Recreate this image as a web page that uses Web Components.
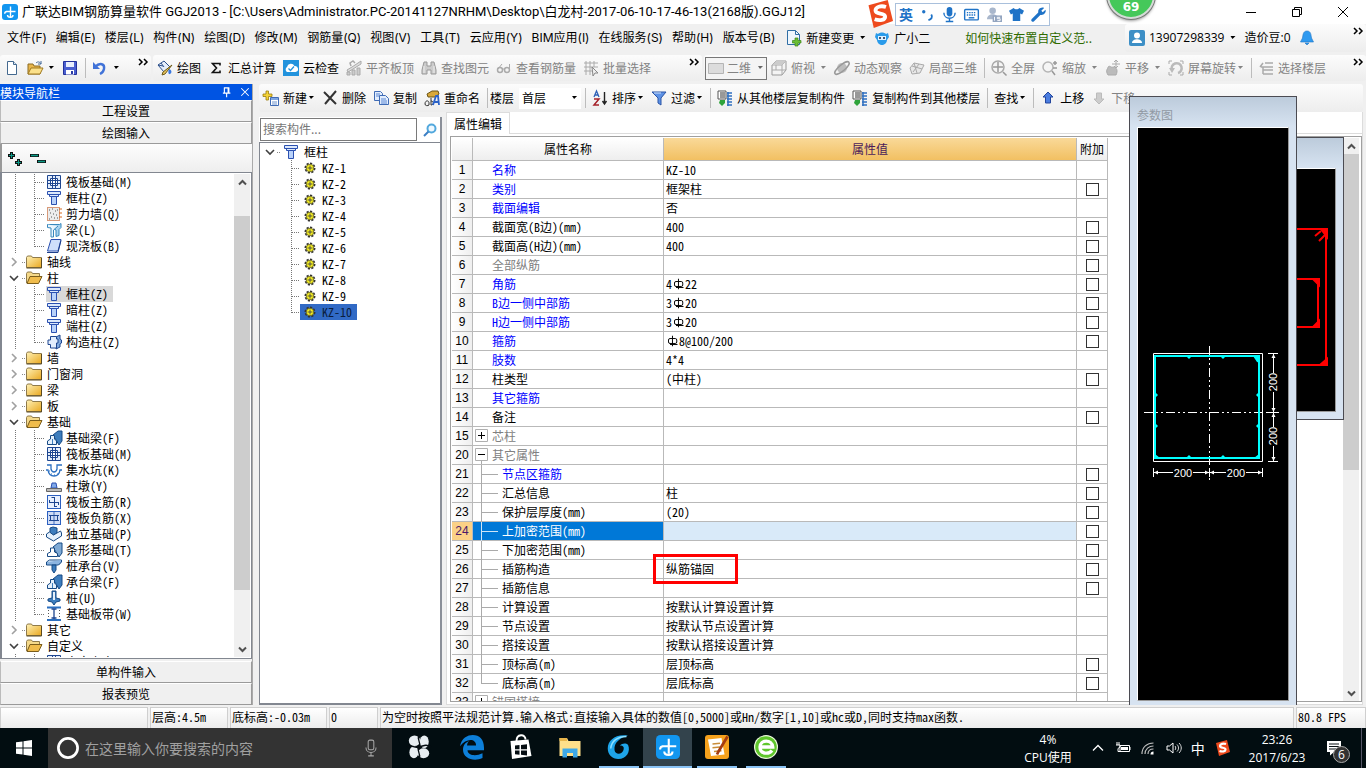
<!DOCTYPE html>
<html lang="zh-CN">
<head>
<meta charset="utf-8">
<title>广联达BIM钢筋算量软件 GGJ2013</title>
<style>
html,body{margin:0;height:100%}
body{font:12px/16px "Open Sans","Noto Sans CJK SC",sans-serif;color:#000;background:#f0f0f0;overflow:hidden}
bim-app{height:100%}
</style>
</head>
<body>
<bim-app></bim-app>
<script>
const ICONS={
logo:'<rect width="16" height="16" rx="3" fill="#1296f0"/><path d="M8.500 2.500v10M5.500 11q0 2.300 3 2.300 2.500 0 2.500-2.300M13.500 7.500H5q-2.300 0-2.300 2.200M4 7.500h3" fill="none" stroke="#fff" stroke-width="1.400"/>',
doc:'<path d="M3.500 1.500h6l3 3v10h-9z" fill="#fff" stroke="#44698f"/><path d="M9.500 1.500v3h3" fill="#dbe8f5" stroke="#44698f"/>',
open:'<path d="M1 4h5l1 2h6v8H1z" fill="#e8b64c" stroke="#8b6a20"/><path d="M1 14l3-6h12l-3 6z" fill="#fbe08a" stroke="#a07a20"/><path d="M9 3c2-2 4-1 5 1M14 1v3h-3" fill="none" stroke="#456a9a"/>',
save:'<path d="M1.500 1.500h13v13h-13z" fill="#4a5fd0" stroke="#23309a"/><path d="M4 2h8v5H4z" fill="#e9eefc"/><path d="M4 10h8v4.500H4z" fill="#fff"/><path d="M9 11h2v3H9z" fill="#2b3aa5"/>',
undo:'<path d="M3 7c5-5 10-3 9 2-.500 2.500-2 4-4 5" fill="none" stroke="#4173d8" stroke-width="2.400"/><path d="M1 2v7h7z" fill="#4173d8"/>',
paint:'<path d="M1 5l6-4 6 6-6 5z" fill="#e6eefb" stroke="#2b4f8a"/><path d="M4 3l3 4M1 5l5 1" stroke="#2b4f8a"/><path d="M15 5l-7 9-3 1 1-3z" fill="#e8c35a" stroke="#6d5a1a"/><path d="M12 9c3 1 3 4 1 5s-2-3-1-5" fill="#3a78e0"/>',
sigma:'<path d="M12 5.500V3.500H4.500L8.500 8l-4 4.500H12v-2" fill="none" stroke="#111" stroke-width="1.600"/>',
cloud:'<rect width="16" height="16" fill="#2293dd"/><path d="M4 12a3 3 0 0 1 0-5 4 4 0 0 1 7.500-1A3 3 0 0 1 12.500 12z" fill="#fff"/><path d="M5.500 8.500l2 2 3.500-4" stroke="#2293dd" stroke-width="1.300" fill="none"/>',
flat:'<path d="M1 10l5-3 9-6 0 3-8 5-5 3z" fill="#ddd" stroke="#aaa"/><path d="M5 6L4 3l3-2 2 2" fill="none" stroke="#aaa" stroke-width="1.500"/><path d="M1 12h3v3H1zM6 10h3v5H6zM11 8h3v7h-3z" fill="#ccc" stroke="#aaa"/>',
binoc:'<path d="M3 2h3v4h4V2h3l2 8v4h-5v-4H6v4H1v-4z" fill="#ccc" stroke="#999"/><path d="M3 6v7M13 6v7" stroke="#eee"/>',
glasses:'<circle cx="4" cy="10" r="2.500" fill="none" stroke="#aaa" stroke-width="1.500"/><circle cx="11" cy="10" r="2.500" fill="none" stroke="#aaa" stroke-width="1.500"/><path d="M6 9h3M2 9l4-5M13.500 10V4" stroke="#aaa" fill="none"/>',
batch:'<path d="M1 3h14M1 7h14M1 11h8M3 1v14M7 1v14M11 1v6" stroke="#aaa" fill="none"/><path d="M9 7l6 6-3 0-2 3z" fill="#eee" stroke="#888"/>',
flatrect:'<path d="M.500 3.500h15v10H.500z" fill="#dcdcdc" stroke="#b5b5b5"/>',
cube:'<path d="M1 5l4-4h10v9l-4 5H1z" fill="#f4f4f4" stroke="#999"/><path d="M1 5h10v10M11 5l4-4M5 1v9H1M5 10h10" fill="none" stroke="#aaa"/><path d="M1 5l4-4h10l-4 4z" fill="#ccc"/>',
orbit:'<circle cx="8" cy="8" r="5" fill="#bdbdbd"/><ellipse cx="8" cy="8" rx="9" ry="3" transform="rotate(-40 8 8)" fill="none" stroke="#999" stroke-width="1.500"/>',
part3d:'<path d="M1 8l4-5 10 2-4 8-8 1z" fill="#e8e8e8" stroke="#aaa"/><path d="M5 3l3 10M10 4l-6 8M3 6l10 3" stroke="#aaa" fill="none"/>',
full:'<circle cx="7" cy="7" r="6" fill="#f5f5f5" stroke="#aaa" stroke-width="1.500"/><path d="M7 2v10M2 7h10M12 12l3.500 3.500" stroke="#999" stroke-width="1.500"/>',
zoomi:'<circle cx="6" cy="7" r="5" fill="#f5f5f5" stroke="#b5b5b5" stroke-width="1.500"/><path d="M10 11l3 4M11 3h4M13 1v4M11 8h4" stroke="#999" stroke-width="1.500"/>',
pan:'<path d="M3 15c-3-5 0-6 0-8 2-2 3 1 5 0 4 0 5 4 3 8z" fill="#bbb" stroke="#aaa"/><path d="M11 0v8M7 4h8M9 2l2-2 2 2M9 6l2 2 2-2" stroke="#aaa" fill="none"/>',
rot:'<path d="M1 4V1h3M12 1h3v3M15 12v3h-3M4 15H1v-3" stroke="#aaa" fill="none"/><path d="M4 10a5 5 0 1 1 6 3" stroke="#bbb" stroke-width="2.500" fill="none"/><path d="M1 8h6l-3 5z" fill="#bbb"/>',
floors:'<path d="M7 3h8M3 7h12M5 10h10M5 14h10M5 7v7M5 3l-3 4" stroke="#aaa" stroke-width="1.500" fill="none"/>',
add:'<path d="M3 1h2.500v3H9v2.500H5.500V10H3V6.500H0V4h3z" fill="#f5d437" stroke="#9b7c10" stroke-width=".800"/><path d="M7.500 7.500h8v8h-8z" fill="#fff" stroke="#3f6bb5"/><path d="M8 8h7v2H8z" fill="#7fa5e0"/><path d="M9 12h5M9 14h5" stroke="#6d92cc"/>',
del:'<path d="M2 2l12 12M14 1L3 14" stroke="#333" stroke-width="2"/>',
copy:'<path d="M1.500 1.500h6l2 2v7h-8z" fill="#e2edfd" stroke="#3f6bb5"/><path d="M6.500 5.500h6l3 3v6h-9z" fill="#e2edfd" stroke="#3f6bb5"/><path d="M3 4h4M3 6h3M8 9h5M8 11h6M8 13h6" stroke="#5b87d4"/>',
rename:'<path d="M3 4l5-3h6l1 3-4 3H4z" fill="#d8a83a" stroke="#6d5618"/><path d="M1 14c0-4 4-4 4-1v2c-1 1-4 1-4-1" fill="none" stroke="#333"/><path d="M7 8v7c3 0 3-4 0-4" fill="none" stroke="#333"/><path d="M9 15l3-9h2l1 9M10 12h5" fill="none" stroke="#2b62c8" stroke-width="1.800"/>',
sort:'<path d="M2 7l2.500-6L7 7M3 5h3" fill="none" stroke="#2f62b8" stroke-width="1.300"/><path d="M2 9h5l-5 6h5" fill="none" stroke="#a5222a" stroke-width="1.500"/><path d="M12.500 2v11M10.500 11l2 3 2-3" fill="none" stroke="#222" stroke-width="1.400"/>',
filter:'<path d="M1 2h14L10 8v7l-3-2V8z" fill="#5d92e6" stroke="#2b54a5"/><path d="M3 3h7" stroke="#cfe0fb"/>',
cpfrom:'<path d="M1 1h8v8H1z" fill="#fff" stroke="#555"/><path d="M3 3h5M3 5h5M3 7h5" stroke="#333"/><path d="M3 10h5v3l-3 3-3-3z" fill="#2fa33b"/><path d="M10 3h5M10 6h5M10 9h5M10 12h5M10 15h5M11 2v14" stroke="#2f6fc0" stroke-width="1.500"/>',
up:'<path d="M8 2l5 5H10.500v6h-5V7H3z" fill="#4a7de0" stroke="#23459c"/>',
down:'<path d="M8 14l5-5H10.500V3h-5v6H3z" fill="#ccc" stroke="#bbb"/>',
search:'<circle cx="9.500" cy="6.500" r="4" fill="#eef8ff" stroke="#52a8dd" stroke-width="2"/><path d="M6.500 9.500L2 14" stroke="#3b7fc4" stroke-width="2"/>',
folder:'<defs><linearGradient id="f" x2="1" y2="1"><stop stop-color="#fff2b8"/><stop offset="1" stop-color="#e9a820"/></linearGradient></defs><path d="M.500 3.500l1-1.500h4l1 1.500h9v10H.500z" fill="url(#f)" stroke="#8f7a4a"/><path d="M.500 14h15M15.500 4v10" stroke="#5b4a20"/>',
folderopen:'<path d="M.500 13V3.500l1-1.500h4l1 1.500h7V7" fill="#f5d98a" stroke="#8f7a4a"/><path d="M1 13.500L4 6.500h12L12.500 13.500z" fill="#f0bc4c" stroke="#7a5d1c"/>',
column:'<path d="M1.500 1.500h13v3h-13zM3.500 4.500h9v2h-9z" fill="#dce9fb" stroke="#2b50b0"/><path d="M5.500 6.500h5v8h-5z" fill="#b9d2fa" stroke="#2b50b0"/>',
raft:'<path d="M1.500 1.500h13v13h-13z" fill="#e3edfb" stroke="#1e4690"/><path d="M4.500 4.500h7v7h-7z" fill="#fff" stroke="#1e4690"/><path d="M6.500 2v12M9.500 2v12M2 6.500h12M2 9.500h12" fill="none" stroke="#1e4690"/>',
wall:'<rect x="1.500" y="1.500" width="12" height="13" fill="#ececec" stroke="#d89a7a"/><path d="M3 4h1M6 3h1M9 5h1M4 7h1M7 8h1M10 9h1M5 11h1M8 12h1M11 4h1M3 13h1M11 12h1" stroke="#555"/><path d="M13 3h3M13 7h3M13 11h3" stroke="#d56a20"/>',
beam:'<path d="M1.500 2.500h12l1.500-1v4l-2 2v6l-3 1V8l-6-3z" fill="#a8d3f0" stroke="#3788bd"/><path d="M1.500 2.500v3L5 6v9h2.500V8L12 4" fill="#eaf5fd" stroke="#3788bd"/>',
slab:'<path d="M5 1.500h10L12 13H1.500z" fill="#cfe0fb" stroke="#2b50b0"/><path d="M1 14.500h11l3-12" fill="none" stroke="#1e3f8a"/>',
gcol:'<path d="M10 3l4-2v4l1.500 1v3L14 10v3l-4 2z" fill="#7fa8dd" stroke="#1e4690"/><path d="M4.500 2.500h6V5H12v4h-1.500v5h-6v-3.500H2V6h2.500z" fill="#e2edfd" stroke="#1e4690"/>',
fbeam:'<path d="M7 5l5-4h4v10l-3 4z" fill="#3d7dbd" stroke="#174a85"/><path d="M1.500 14.500V11l3-2V5.500h4V9l2 2v3.500z" fill="#e6f1fc" stroke="#174a85"/><path d="M6.500 9v5" stroke="#3d7dbd"/>',
sump:'<path d="M1 3h4v4c1 4 5 4 6 0V3h5M0 8h2c1 8 11 8 12 0h2" fill="none" stroke="#2b6fc0" stroke-width="1.300"/><path d="M3 9h1M5 12h1M8 13h1M11 12h1M13 9h1" stroke="#2b6fc0"/>',
pier:'<path d="M6 5h4l1 5H5z" fill="#7fa8e8" stroke="#2b50b0"/><path d="M.500 10.500h15v3H.500z" fill="#bbb" stroke="#666"/>',
rebar1:'<rect x="1.500" y="1.500" width="13" height="13" fill="#eaf1fe" stroke="#2b5fc0"/><path d="M8.500 3v10M5.500 3.500h3M3 8.500h10M3.500 6v3M12.500 8v3M8 12.500h3" fill="none" stroke="#1e4690"/>',
rebar2:'<rect x="1.500" y="1.500" width="13" height="13" fill="#cfdcf5" stroke="#2b5fc0"/><path d="M8 2v12" stroke="#8aa6d8" stroke-width="2"/><path d="M3 5.500h10M3 10.500h10M4.500 5v3M11.500 5v3M4.500 8v3M11.500 8v3" fill="none" stroke="#1e4690"/>',
isolated:'<path d="M4 2l3-1 4 1v5l-4 2-3-2z" fill="#3d7dbd" stroke="#174a85"/><path d="M.500 8l3-2 4 3 7-4 1 2v3l-8 5-7-4z" fill="#e6f1fc" stroke="#174a85"/>',
strip:'<path d="M7 5l5-4h4v10l-3 4z" fill="#7faad5" stroke="#174a85"/><path d="M1.500 14.500l0-3 3-1.500V6h4v4l3 1.500v3z" fill="#fff" stroke="#174a85"/>',
cap:'<path d="M.500 4l3-2h12l-2 4H.500z" fill="#e6f1fc" stroke="#174a85"/><path d="M.500 4v3h12l3-3V2" fill="#8bb4e0" stroke="#174a85"/><path d="M6 7h4v5l-2 3-2-3z" fill="#3d7dbd" stroke="#174a85"/>',
pile:'<path d="M6 1h4v7l4 1v2l-4 1-2 3-2-3-4-1V9l4-1z" fill="#3d7dbd" stroke="#174a85"/><path d="M7 2h2v8H7z" fill="#e6f1fc"/>',
band:'<path d="M1 1.500h14M1 14h14" stroke="#2b6fc0" stroke-width="2"/><path d="M8 3v10M5.500 3h5M5.500 12h5" stroke="#1e4690" stroke-width="1.300"/><path d="M2.500 4v8M13.500 4v8" stroke="#555" stroke-dasharray="1 2"/>',
gear:'<circle cx="8" cy="8" r="4.700" fill="none" stroke="#333" stroke-width="1.600" stroke-dasharray="2.200 1.400"/><circle cx="8" cy="8" r="3.800" fill="#f7f020" stroke="#55531a" stroke-width=".800"/><path d="M8 5.500v5M5.500 8h5" stroke="#444" stroke-width=".900"/>',
addall:'<path d="M4.500 1v7M1 4.500h7M11.500 8v7M8 11.500h7" stroke="#111" stroke-width="3"/><path d="M4.500 2v5M2 4.500h5M11.500 9v5M9 11.500h5" stroke="#0b9a86" stroke-width="1"/>',
remall:'<path d="M0 4.500h9M7 10.500h9" stroke="#111" stroke-width="3"/><path d="M1 4.500h7M8 10.500h7" stroke="#0b9a86" stroke-width="1.400"/>',
change:'<path d="M1.500.500h8l4 4v10h-12z" fill="#eef6fd" stroke="#2f6ea5"/><path d="M9.500.500v4h4" fill="none" stroke="#2f6ea5"/><path d="M9 8h3v2.500H15V13h-3v3H9v-3H6.500v-2.500H9z" fill="#6abf35" stroke="#3c8518" stroke-width=".700"/>',
robot:'<path d="M2 3l2 1c2-2 6-2 8 0l2-1 1 4-2 3c0 3-3 5-5 5s-5-2-5-5L1 7z" fill="#2a9bea"/><path d="M4 6h8v4H4z" fill="#dff2ff"/><circle cx="6" cy="8" r="1" fill="#124"/><circle cx="10" cy="8" r="1" fill="#124"/>',
user:'<rect width="16" height="16" rx="2" fill="#3d8fc6"/><circle cx="8" cy="5.500" r="3" fill="#fff"/><path d="M3 13c0-5 10-5 10 0z" fill="#fff"/>',
bell:'<path d="M8 1c4 0 4 4 4.500 7l2 4h-13l2-4C4 5 4 1 8 1M6 13h4l-2 2z" fill="#2f9af0" stroke="#1c74c4" stroke-width=".600"/>',
mic:'<rect x="5" y="0" width="6" height="10" rx="3" fill="#1f73c7"/><path d="M2 6c0 8 12 8 12 0M8 12v4M4 15.500h8" fill="none" stroke="#1f73c7" stroke-width="1.500"/>',
kbd:'<rect x=".700" y="2.700" width="14.600" height="11" rx="1" fill="#fff" stroke="#1f73c7" stroke-width="1.500"/><path d="M3 6h10M3 8.500h10" stroke="#1f73c7" stroke-width="1.500" stroke-dasharray="1.500 1"/><path d="M5 11.500h6" stroke="#1f73c7" stroke-width="1.500"/>',
person:'<circle cx="6" cy="4" r="3.500" fill="#a9b7cc"/><path d="M0 13c0-7 12-7 12 0z" fill="#a9b7cc"/><path d="M6 9h10v7H6z" fill="#93a5c0"/><path d="M8 10.500v4M14 11h-3v1.500h3v2h-3" stroke="#fff" fill="none"/>',
shirt:'<path d="M5 1c1 2 5 2 6 0l5 3-2 4-2-1v8H4V7L2 8 0 4z" fill="#1f73c7"/>',
wrench:'<path d="M2 14l7-7" stroke="#1f73c7" stroke-width="3.500" stroke-linecap="round"/><path d="M14 1l-3 3 1.500 1.500L15.500 3c1 3-2 6-5 5.500S6.500 3 9.500 1.300 14 1 14 1z" fill="#1f73c7"/>',
punct:'<circle cx="4" cy="5" r="1.800" fill="#1f73c7"/><path d="M12 8c2 3 0 5-3 6" fill="none" stroke="#1f73c7" stroke-width="2"/>',
sogou:'<path d="M2 3l11-3 3 12-11 4z" fill="#ee4a1d"/><path d="M12 4C9 3 6 4 6 6c0 2.500 5.500 1 5.500 3.500 0 2-3 2.500-6 1.500" fill="none" stroke="#fff" stroke-width="2.200"/>',
win:'<path d="M0 2.300l6.500-.900v6.100H0zM7.500 1.300L16 0v7.500H7.500zM0 8.500h6.500v6.100L0 13.700zM7.500 8.500H16V16l-8.500-1.300z" fill="#fff"/>',
ring:'<circle cx="8" cy="8" r="6.400" fill="none" stroke="#fff" stroke-width="1.800"/>',
tmic:'<rect x="5.500" y="1" width="5" height="8.500" rx="1.500" fill="none" stroke="#aaa" stroke-width=".900"/><path d="M3.500 7.500c0 6 9 6 9 0M8 12v3M5.500 15h5" fill="none" stroke="#aaa" stroke-width=".900"/>',
flower:'<g fill="#e8eef2"><ellipse cx="5" cy="3.800" rx="3.800" ry="3.500"/><ellipse cx="11.500" cy="4.500" rx="3" ry="4.200"/><ellipse cx="4.600" cy="11.500" rx="3" ry="4"/><ellipse cx="11" cy="12.200" rx="3.800" ry="3.300"/></g><path d="M8 0c-2 4 2 4 0 8s2 4 0 8M0 8c4-2 4 1 8 0s4-2 8 0" stroke="#050d12" fill="none" stroke-width=".900"/>',
edge:'<path d="M0 7.500C1 2 5 0 8.500 0 13 0 16 3 16 8.500v1.700H5c.300 3.500 5.500 4.300 10 2v3.200C9 18 2 15.500 2 9.800 2 7 3.500 5 6 4 5 5 4.800 6 4.700 7h6C10.700 2 4 2 0 7.500z" fill="#0d7fd9"/>',
store:'<path d="M1 4l12-1 2 11-13 2z" fill="#fff"/><path d="M5 4c0-5 6-5 6-1" fill="none" stroke="#fff" stroke-width="1.300"/><path d="M4 7l3-.300v2.800H4zM8 6.600l4-.400v3.300H8zM4 10.300h3v2.800l-3-.300zM8 10.300h4v3.400l-4-.500z" fill="#050d12"/>',
explorer:'<path d="M1 2h5l1 2h8v10H1z" fill="#ffe08a"/><path d="M1 2h5v2H1z" fill="#e8b64c"/><path d="M3 15V9h10v6h-3v-3H6v3z" fill="#3fa9e8"/>',
g:'<path d="M14 .500C6-1 .500 3.500.500 9c0 4 3 7 7 7 5.500 0 8.500-5 6.500-9.500-1.500-1.500-4-1-5.500.500 2.500 0 3 1 2.500 3-.800 3-5.500 3.500-6 0C4.500 5 9 1.500 14 .500z" fill="#1ea5ea"/><path d="M13 1C7 1 3 4 2.500 9" stroke="#8fe0ff" fill="none"/>',
note:'<rect width="16" height="16" rx="2" fill="#f5a11c"/><path d="M2 3l9-1 2 11-9 1z" fill="#fff"/><path d="M5 6l5-.500M5 8.500l5-.500M6 11l5-.500" stroke="#c98d3a"/><path d="M15 1L9 11l-1 2" stroke="#a53c10" stroke-width="1.800"/>',
ie:'<circle cx="8" cy="8" r="8" fill="#eefadf"/><circle cx="8" cy="8" r="7.200" fill="#5fc62c"/><path d="M4 8h8.500C12 2.500 4 3 4 8c0 5 6 5 8 2.300" fill="none" stroke="#fff" stroke-width="2.200"/>',
chev:'<path d="M3 10.500l5-5 5 5" fill="none" stroke="#fff" stroke-width="1.300"/>',
batt:'<path d="M5 5.500h9.500v6H5zM15 7v3M2 2v3M4 2v3M1 5h4v2l-2 1.500v3h2" fill="none" stroke="#fff"/><path d="M6 7h7v3H6z" fill="#fff"/>',
wifi:'<path d="M2 14C2 7 7 3 13.500 3M5 14c0-5 4-8 8.500-8M8 14c0-3 2-5 5.500-5" fill="none" stroke="#bbb" stroke-width="1.200"/><path d="M10.500 14.500c0-2 1-3 3-3v3z" fill="#fff"/>',
vol:'<path d="M1 6h2.500L7 3v10l-3.500-3H1z" fill="none" stroke="#fff"/><path d="M9 6c1 1 1 3 0 4M11 4.500c2 2 2 5 0 7M13 3c3 3 3 7 0 10" fill="none" stroke="#ddd"/>',
pin:'<path d="M4.500 2v7M10.500 2v7M4 2.500h7M2.500 9.500h10M7.500 10v5M9.500 3v6" fill="none" stroke="#fff" stroke-width="1.500"/>',
x:'<path d="M3 3l10 10M13 3L3 13" stroke="#fff" stroke-width="1.400"/>',
steel:'<path d="M4 4.700h7q2 0 2 2v2.600q0 2-2 2H4q-2 0-2-2V6.700q0-2 2-2zM7.300 1v14M4 12.700h10" fill="none" stroke="#000" stroke-width="1.300"/>',
more:'<path d="M4 4l3 3-3 3M9 4l3 3-3 3" fill="none" stroke="#000" stroke-width="1.500"/>',
notice:'<path d="M1 1h14v11H8l-4 3.500V12H1z" fill="#fff"/><path d="M3 4h10M3 6.500h10M3 9h7" stroke="#0a1216" stroke-width="1.200"/>'
};
function define(tag,css,html){
  const t=document.createElement('template');
  customElements.define(tag,class extends HTMLElement{
    constructor(){super();this.attachShadow({mode:'open'})}
    connectedCallback(){
      if(this.shadowRoot.childNodes.length)return;
      t.innerHTML=`<style>*{box-sizing:border-box}button{font:inherit;color:inherit;background:none;border:0;padding:0;margin:0}${css}</style>${typeof html==='function'?html(this):html}`;
      this.shadowRoot.append(t.content.cloneNode(true));
    }
  });
}
const CJK='font-family:"Noto Sans CJK SC",sans-serif;font-feature-settings:"hwid";';
const attr=(e,n,d='')=>e.getAttribute(n)??d;

define('ui-icon',':host{display:block;flex:none;width:var(--size,16px);height:var(--size,16px)}svg{display:block;width:100%;height:100%;overflow:visible}',
  e=>`<svg viewBox="0 0 16 16" aria-hidden="true">${ICONS[attr(e,'name')]}</svg>`);

define('title-bar',`:host{display:flex;align-items:center;height:24px;flex:none;background:#fff;padding-left:2px;gap:4px}
h1{font:13px/16px Roboto,"Noto Sans CJK SC",sans-serif;margin:0;flex:1;white-space:nowrap}.win{display:flex}button{width:46px;height:22px;display:grid;place-items:center}`,
`<ui-icon name="logo"></ui-icon><h1>广联达BIM钢筋算量软件 GGJ2013 - [C:\\Users\\Administrator.PC-20141127NRHM\\Desktop\\白龙村-2017-06-10-17-46-13(2168版).GGJ12]</h1>
<div class="win"><button aria-label="最小化"><svg width="12" height="12"><path d="M1 6.500h10" stroke="#000"/></svg></button>
<button aria-label="还原"><svg width="12" height="12" fill="none" stroke="#000"><path d="M1.500 3.500h7v7h-7zM3.500 3.500v-2h7v7h-2"/></svg></button>
<button aria-label="关闭"><svg width="12" height="12" stroke="#000"><path d="M1 1l10 10M11 1L1 11"/></svg></button></div>`);

define('drop-arrow',':host{display:block;flex:none;width:7px;height:4px;background:currentColor;clip-path:polygon(1px 0,6px 0,3px 3px)}','');

define('tool-button',`:host{display:block;flex:none}button{display:flex;align-items:center;white-space:nowrap;gap:4px;height:20px;font-family:"Noto Sans CJK SC",sans-serif}
:host([disabled]) button{color:#838383}:host([drop]) drop-arrow{margin-left:-3px}:host([split]) drop-arrow{margin-left:1px}:host([wide]) button{font-family:"Open Sans","Noto Sans CJK SC",sans-serif}`,
 e=>`<button ${e.hasAttribute('disabled')?'disabled':''} aria-label="${attr(e,'label')}">${attr(e,'icon')?`<ui-icon name="${attr(e,'icon')}"></ui-icon>`:''}<slot></slot>${e.hasAttribute('drop')||e.hasAttribute('split')?'<drop-arrow></drop-arrow>':''}</button>`);

define('tool-sep',':host{display:block;flex:none;width:1px;height:20px;background:#bcbcbc;margin-right:-1px}','');

define('tool-group',`:host{display:flex;align-items:center;gap:7px;height:26px;padding:0 4px;background:linear-gradient(#fcfcfc,#ededed);border-radius:3px}
:host([more]){padding-right:0}.more{margin-left:auto;align-self:flex-start;flex:none}`,
 e=>`<slot></slot>${e.hasAttribute('more')?'<button class="more" aria-label="更多"><ui-icon name="more"></ui-icon></button>':''}`);

define('menu-bar',`:host{display:flex;align-items:center;height:28px;flex:none;padding-left:7px}
nav{display:flex;gap:9px;flex:none;font-family:Inter,"Noto Sans CJK SC",sans-serif}button{white-space:nowrap}
.app{display:flex;gap:8px;margin-left:11px}a{margin-left:35px;color:#2f6b00;text-decoration:none;white-space:nowrap;font-family:"Noto Sans CJK SC",sans-serif}
tool-group{margin-left:auto;width:241px;height:28px;gap:8px}`,
`<nav aria-label="主菜单">${['文件(F)','编辑(E)','楼层(L)','构件(N)','绘图(D)','修改(M)','钢筋量(Q)','视图(V)','工具(T)','云应用(Y)','BIM应用(I)','在线服务(S)','帮助(H)','版本号(B)'].map(t=>`<button>${t}</button>`).join('')}</nav>
<div class="app"><tool-button icon="change" split>新建变更</tool-button><tool-button icon="robot">广小二</tool-button></div>
<a href="#tip">如何快速布置自定义范..</a>
<tool-group more><tool-button icon="user" split wide>13907298339</tool-button><tool-button wide>造价豆:0</tool-button><tool-button icon="bell" label="通知"></tool-button></tool-group>`);

define('main-tools',`:host{display:grid;grid-template-columns:151px 549px 1fr;gap:2px;height:32px;align-items:center;flex:none}
select{appearance:none;border:0;background:none;font:12px/16px "Noto Sans CJK SC",sans-serif;color:#838383;padding:0;width:24px}
.combo{display:flex;align-items:center;gap:3px;border:1px solid #777;height:23px;width:62px;padding:0 3px 0 2px;flex:none;color:#666;background:#f4f4f4}.combo drop-arrow{margin-left:3px}
.view{padding-left:1px}.view .combo{margin-right:-3px}`,
`<tool-group more><tool-button icon="doc" label="新建"></tool-button><tool-button icon="open" label="打开" split></tool-button><tool-button icon="save" label="保存"></tool-button><tool-sep></tool-sep><tool-button icon="undo" label="撤销" split></tool-button></tool-group>
<tool-group more><tool-button icon="paint">绘图</tool-button><tool-button icon="sigma">汇总计算</tool-button><tool-button icon="cloud">云检查</tool-button><tool-button icon="flat" disabled>平齐板顶</tool-button><tool-button icon="binoc" disabled>查找图元</tool-button><tool-button icon="glasses" disabled>查看钢筋量</tool-button><tool-button icon="batch" disabled>批量选择</tool-button></tool-group>
<tool-group more class="view"><div class="combo"><ui-icon name="flatrect"></ui-icon><select aria-label="视图模式"><option>二维</option></select><drop-arrow></drop-arrow></div>
<tool-button icon="cube" disabled split>俯视</tool-button><tool-button icon="orbit" disabled>动态观察</tool-button><tool-button icon="part3d" disabled>局部三维</tool-button><tool-sep></tool-sep><tool-button icon="full" disabled>全屏</tool-button><tool-button icon="zoomi" disabled split>缩放</tool-button><tool-button icon="pan" disabled split>平移</tool-button><tool-button icon="rot" disabled drop>屏幕旋转</tool-button><tool-sep></tool-sep><tool-button icon="floors" disabled>选择楼层</tool-button></tool-group>`);

define('edit-tools',`:host{display:block;flex:none;padding-right:3px}tool-group{height:28px}
label{display:flex;align-items:center;gap:5px;margin:0 -3px 0 -4px;font-family:"Noto Sans CJK SC",sans-serif;white-space:nowrap}.sel{display:flex;align-items:center;background:#fff;width:62px;height:21px;padding:0 3px}
select{appearance:none;border:0;background:none;font:inherit;padding:0;flex:1;min-width:0}`,
`<tool-group><tool-button icon="add" drop>新建</tool-button><tool-button icon="del">删除</tool-button><tool-button icon="copy">复制</tool-button><tool-button icon="rename">重命名</tool-button><tool-sep></tool-sep>
<label>楼层<span class="sel"><select><option>首层</option></select><drop-arrow></drop-arrow></span></label><tool-sep></tool-sep>
<tool-button icon="sort" drop>排序</tool-button><tool-button icon="filter" drop>过滤</tool-button><tool-sep></tool-sep><tool-button icon="cpfrom">从其他楼层复制构件</tool-button><tool-button icon="cpfrom">复制构件到其他楼层</tool-button><tool-sep></tool-sep><tool-button drop>查找</tool-button><tool-sep></tool-sep><tool-button icon="up">上移</tool-button><tool-button icon="down" disabled>下移</tool-button></tool-group>`);

define('scroll-bar',`:host{display:flex;flex-direction:column;width:16px;flex:none;background:#f0f0f0}button{height:16px;display:grid;place-items:center;flex:none}
.track{flex:1;display:flex;flex-direction:column;min-height:0}.thumb{background:#cdcdcd;width:100%}`,
 e=>{const [a,b,c]=attr(e,'parts').split(',');const v=d=>`<svg width="9" height="7"><path d="${d}" fill="none" stroke="#505050" stroke-width="2"/></svg>`;
 return `<button aria-label="向上滚动">${v('M1 5.500L4.500 2 8 5.500')}</button><div class="track"><div style="flex:${a}"></div><div class="thumb" style="flex:${b}"></div><div style="flex:${c}"></div></div><button aria-label="向下滚动">${v('M1 1.500L4.500 5 8 1.500')}</button>`});

const GUIDES={
 branch:[23,'<path d="M19 8.500h4" stroke="#888" stroke-dasharray="1 1"/>'],
 leaf:[43,'<path d="M12.500 0v16M31.500 0v16M32 8.500h10" stroke="#777" stroke-dasharray="1 1"/>'],
 last:[43,'<path d="M12.500 0v16M31.500 0v9M32 8.500h10" stroke="#777" stroke-dasharray="1 1"/>'],
 root:[23,'<path d="M17 8.500h4" stroke="#888" stroke-dasharray="1 1"/>'],
 kid:[40,'<path d="M31.500 0v16M32 8.500h10" stroke="#777" stroke-dasharray="1 1"/>'],
 kidlast:[40,'<path d="M31.500 0v9M32 8.500h10" stroke="#777" stroke-dasharray="1 1"/>']
};
define('tree-item',`:host{display:flex;height:16px;line-height:16px;white-space:nowrap;${CJK}}svg{display:block;flex:none}
span{display:flex;gap:5px;padding-right:5px}:host([leaf]) span,:host([kid]) span{gap:4px}:host([kid]) ui-icon{margin-left:2px}
:host([selected=gray]) span{background:#d9d9d9}:host([selected=blue]) span{background:#316ac5}`,
 e=>{const [w,p]=GUIDES[attr(e,'guide')];const o=attr(e,'open',null);const cx=attr(e,'guide')==='root'?10:11;
 const c=o==='1'?`<path d="M${cx-4} 6l4 4 4-4" fill="none" stroke="#404040" stroke-width="1.600"/>`:o==='0'?`<path d="M${cx-2} 4l4 4-4 4" fill="none" stroke="#a0a0a0" stroke-width="1.600"/>`:'';
 return `<svg width="${w}" height="16">${p}${c}</svg><span><ui-icon name="${attr(e,'icon')}"></ui-icon><slot></slot></span>`});

const leaf=(i,t,l,s)=>`<tree-item leaf guide="${l?'last':'leaf'}" icon="${i}" ${s?'selected="gray"':''}>${t}</tree-item>`;
const dir=(t,o)=>`<tree-item guide="branch" open="${o}" icon="${o?'folderopen':'folder'}">${t}</tree-item>`;
define('nav-panel',`:host{display:flex;flex-direction:column;width:253px;flex:none;min-height:0;border-right:1px solid #aaa}
header{display:flex;align-items:center;gap:6px;height:16px;background:#0054e3;color:#fff;padding-right:1px;flex:none;font:12px/15px "Noto Sans CJK SC",sans-serif}header b{font-weight:400;flex:1}header button{--size:12px}
.bar{height:22px;flex:none;border:1px solid #9a9a9a;border-top-color:#fff;border-left-color:#bbb;background:#f0f0f0;font-family:"Noto Sans CJK SC",sans-serif}
.tools{display:flex;align-items:center;gap:7px;height:28px;padding:2px 5px 0;flex:none;background:linear-gradient(#fdfdfd,#eee);border-left:2px solid #999}
.tree{flex:1;min-height:0;display:flex;border:1px solid #828790;border-left-width:2px;background:#fff;padding:1px;margin-bottom:2px}
.items{flex:1;overflow:hidden}`,
`<header><b>模块导航栏</b><button aria-label="固定"><ui-icon name="pin"></ui-icon></button><button aria-label="关闭"><ui-icon name="x"></ui-icon></button></header>
<button class="bar">工程设置</button><button class="bar">绘图输入</button>
<div class="tools"><button aria-label="全部展开"><ui-icon name="addall"></ui-icon></button><button aria-label="全部折叠"><ui-icon name="remall"></ui-icon></button></div>
<div class="tree"><div class="items">${leaf('raft','筏板基础(M)')+leaf('column','框柱(Z)')+leaf('wall','剪力墙(Q)')+leaf('beam','梁(L)')+leaf('slab','现浇板(B)',1)+dir('轴线',0)+dir('柱',1)+leaf('column','框柱(Z)',0,1)+leaf('column','暗柱(Z)')+leaf('column','端柱(Z)')+leaf('gcol','构造柱(Z)',1)+dir('墙',0)+dir('门窗洞',0)+dir('梁',0)+dir('板',0)+dir('基础',1)+leaf('fbeam','基础梁(F)')+leaf('raft','筏板基础(M)')+leaf('sump','集水坑(K)')+leaf('pier','柱墩(Y)')+leaf('rebar1','筏板主筋(R)')+leaf('rebar2','筏板负筋(X)')+leaf('isolated','独立基础(P)')+leaf('strip','条形基础(T)')+leaf('cap','桩承台(V)')+leaf('fbeam','承台梁(F)')+leaf('pile','桩(U)')+leaf('band','基础板带(W)',1)+dir('其它',0)+dir('自定义',1)+leaf('raft','自定义点')}</div><scroll-bar parts="26,375,51"></scroll-bar></div>
<button class="bar">单构件输入</button><button class="bar">报表预览</button>`);

define('component-list',`:host{display:flex;flex-direction:column;width:183px;flex:none;min-height:0;margin-top:5px;border-right:2px solid #8a8f98}
form{display:flex;align-items:center;gap:5px;padding:1px;height:25px;flex:none;background:#fff}
input{width:157px;height:23px;border:1px solid #7a7a7a;outline:0;padding:0 2px 3px;font:12px "Noto Sans CJK SC",sans-serif;background:#fff}input::placeholder{color:#777;opacity:1}
.list{flex:1;min-height:0;background:#fff;border:1px solid #828790;border-right:0;border-bottom-width:2px;padding-top:1px;overflow:hidden}tree-item[selected]{color:#0a1d3d}`,
`<form><input aria-label="搜索构件" placeholder="搜索构件..."><button aria-label="搜索"><ui-icon name="search"></ui-icon></button></form>
<div class="list"><tree-item guide="root" open="1" icon="column">框柱</tree-item>${Array.from({length:10},(_,i)=>`<tree-item kid guide="${i===9?'kidlast':'kid'}" icon="gear" ${i===9?'selected="blue"':''}>KZ-${i+1}</tree-item>`).join('')}</div>`);

const S='<ui-icon name="steel"></ui-icon>';
const ROWS=[[1,'名称','b','KZ-10',0],[2,'类别','b','框架柱',1],[3,'截面编辑','b','否',0],[4,'截面宽(B边)(mm)','','400',1],[5,'截面高(H边)(mm)','','400',1],[6,'全部纵筋','g','',1],[7,'角筋','b',`4${S}22`,1],[8,'B边一侧中部筋','b',`3${S}20`,1],[9,'H边一侧中部筋','b',`3${S}20`,1],[10,'箍筋','b',`${S}8@100/200`,1],[11,'肢数','b','4*4',0],[12,'柱类型','','(中柱)',1],[13,'其它箍筋','b','',0],[14,'备注','','',1],[15,'芯柱','g plus','',0],[20,'其它属性','g minus','',0],[21,'节点区箍筋','b sub','',1],[22,'汇总信息','sub','柱',1],[23,'保护层厚度(mm)','sub','(20)',1],[24,'上加密范围(mm)','sub','',1],[25,'下加密范围(mm)','sub','',1],[26,'插筋构造','sub','纵筋锚固',1],[27,'插筋信息','sub','',1],[28,'计算设置','sub','按默认计算设置计算',0],[29,'节点设置','sub','按默认节点设置计算',0],[30,'搭接设置','sub','按默认搭接设置计算',0],[31,'顶标高(m)','sub','层顶标高',1],[32,'底标高(m)','sub end','层底标高',1],[33,'锚固搭接','g plus','',0]];
define('property-table',`:host{display:block;${CJK}}
table{border-collapse:separate;border-spacing:0;table-layout:fixed;width:100%}
th,td{border-right:1px solid #b9b9b9;border-bottom:1px solid #b9b9b9;padding:0;height:19px;font-weight:400;line-height:18px;text-align:left;white-space:nowrap;vertical-align:middle}
thead th{height:23px;text-align:center;background:linear-gradient(#fff,#eee);line-height:20px}thead .val{background:linear-gradient(#f9d999,#f2c062);color:#4a1a5a}
tbody th{text-align:center;background:linear-gradient(90deg,#fff,#efefef);font-family:"Liberation Sans",sans-serif}
td div{display:flex;align-items:center;height:18px}.name div{padding-left:19px}.v div{padding-left:2px;--size:12px;position:relative}.v ui-icon{margin-left:1px}.chk div{justify-content:center}
.b{color:#00f}.g{color:#808080}.name svg{display:block;flex:none}.name .tree{padding-left:0}
input{appearance:none;margin:0;width:13px;height:13px;border:1px solid #333;background:#fff}
.cur th{background:#fbd186;color:#4a1a6a}.cur .name{background:#0078d7;color:#fff}.cur .v{background:#d9eaf9}
.mark{position:absolute;left:-11px;top:-6px;width:85px;height:30px;border:3px solid #f00}`,
`<table><colgroup><col style="width:21px"><col style="width:191px"><col><col style="width:31px"></colgroup>
<thead><tr><th></th><th>属性名称</th><th class="val">属性值</th><th>附加</th></tr></thead><tbody>${ROWS.map(([n,t,c,v,k])=>{
 const box=c.includes('plus')||c.includes('minus'),sub=c.includes('sub');let g='';
 if(box)g=`<svg width="19" height="18"><path d="M2.500 2.500h12v12h-12z" fill="#fff" stroke="#b0b0b0"/><path d="M5 8.500h7${c.includes('plus')?'M8.500 5v7':''}" stroke="#000"/>${c.includes('minus')?'<path d="M8.500 15v3" stroke="#aaa"/>':''}</svg>`;
 if(sub)g=`<svg width="29" height="19"><path d="M8.500 0v${c.includes('end')?10:19}M8 9.500h17" stroke="${n===24?'#cfe4f7':'#aaa'}" fill="none"/></svg>`;
 return `<tr class="${n===24?'cur':''}"><th scope="row">${n}</th><td class="name"><div class="${c} ${g?'tree':''}">${g}${t}</div></td><td class="v"><div>${v}${n===26?'<i class="mark"></i>':''}</div></td><td class="chk"><div>${k?`<input type="checkbox" aria-label="附加 ${t}">`:''}</div></td></tr>`}).join('')}</tbody></table>`);

define('property-panel',`:host{display:flex;flex-direction:column;flex:1;min-width:0;min-height:0;background:#fff;border:1px solid #dcdcdc;border-top:0;margin:0 3px 0 4px}
.tabs{display:flex;height:22px;flex:none;border-bottom:1px solid #dcdcdc}.tabs button{width:63px;background:#fff;border:1px solid #dcdcdc;border-width:1px 1px 0 0;height:22px;line-height:18px;font-family:"Noto Sans CJK SC",sans-serif}
.box{flex:1;min-height:0;display:flex;border:1px solid #a0a0a0;margin:2px 0 2px 3px;padding:1px 2px 0 1px}
.clip{flex:1;overflow:hidden;padding-right:235px;min-width:0}`,
`<div class="tabs"><button role="tab" aria-selected="true">属性编辑</button></div><div class="box"><div class="clip"><property-table></property-table></div><scroll-bar parts="0,314,214"></scroll-bar></div>`);

define('float-window',`:host{display:flex;flex-direction:column;border:1px solid #4b4b52;background:linear-gradient(#bccbdb,#d7e3f1 30px);padding:0 7px 7px}
header{height:30px;flex:none;padding-top:10px;color:#929aa4;font:12px/16px "Noto Sans CJK SC",sans-serif}
.cv{flex:1;min-height:0;background:#000;border:1px solid #999;border-top-color:#fff;border-left-color:#fff;overflow:hidden}`,
 e=>`<header>${attr(e,'title')}</header><div class="cv"><slot></slot></div>`);

define('column-drawing',':host{display:block;width:100%;height:100%}svg{display:block;width:100%;height:100%}text{font:11px "Liberation Sans",sans-serif;fill:#fff;text-anchor:middle}',
`<svg viewBox="1 0 150 572" fill="none"><g stroke="#fff"><path d="M16.500 225.500h109v108h-109z"/><path d="M72.500 218v134" stroke-dasharray="9 3 2 3 2 3"/><path d="M7 284.500h135" stroke-dasharray="9 3 2 3 2 3"/>
<path d="M131 225.500h10M131 333.500h10M131 284.500h10M136.500 226v19M136.500 264v35M136.500 318v15M16.500 340v9M125.500 340v9M72.500 340v9M17 344.500h19M56 344.500h33M109 344.500h16"/></g>
<path d="M17 344.500l4-2v4zM72 344.500l-4-2v4zM73 344.500l4-2v4zM125 344.500l-4-2v4zM136.500 226l-2 4h4zM136.500 284l-2-4h4zM136.500 285l-2 4h4zM136.500 333l-2-4h4z" fill="#fff"/>
<path d="M18 228h104v102H18z" stroke="#0ff" stroke-width="2"/><path d="M116 228h7v7l-3-1zM54 229l-2 2-2-2M88 229l-2 2-2-2M19 265l2 2-2 2M19 296l2 2-2 2M121 265l-2 2 2 2M121 296l-2 2 2 2M50 329l2-2 2 2M84 329l2-2 2 2M18 326l5 4h-5M122 326l-5 4h5" fill="#0ff"/>
<text x="46" y="349">200</text><text x="99" y="349">200</text><text transform="translate(140 254) rotate(-90)">200</text><text transform="translate(140 308) rotate(-90)">200</text></svg>`);
define('stirrup-drawing',':host{display:block;width:100%;height:100%}svg{display:block;width:100%;height:100%}',
`<svg viewBox="0 0 137 242" preserveAspectRatio="xMaxYMid meet" fill="none" stroke="red" stroke-width="2"><path d="M20 60h108v136H20z"/><path d="M40 110h80v48H40z"/><path d="M117 67l6-5M121 72l6-6"/><path d="M123 60h6v8zM115 110h6v6zM115 158h6v-6zM122 196h7v-6z" fill="red"/></svg>`);

define('status-bar',`:host{display:grid;grid-template-columns:148px 78px 97px 49px 1fr 70px;gap:2px;height:21px;flex:none;margin-top:2px;${CJK}}
span{border:1px solid #cfcfcf;border-width:1px 1px 0;background:linear-gradient(#fff,#ececec);line-height:18px;white-space:nowrap;overflow:hidden;padding-left:1px}`,
`<span></span><span>层高:4.5m</span><span>底标高:-0.03m</span><span>0</span><span>为空时按照平法规范计算.输入格式:直接输入具体的数值[0,5000]或Hn/数字[1,10]或hc或D,同时支持max函数.</span><span>80.8 FPS</span>`);

const task=(i,l,c='')=>`<button class="task ${c}" aria-label="${l}"><ui-icon name="${i}"></ui-icon></button>`;
define('task-bar',`:host{display:flex;height:40px;flex:none;background:#020d11;color:#fff;align-items:stretch}
button{display:grid;place-items:center}.start{width:48px}
label{display:flex;align-items:center;gap:5px;width:344px;background:#333;padding:0 12px 0 8px;--size:24px}label input{flex:1;min-width:0;background:none;border:0;outline:0;padding:0;font:14px "Noto Sans CJK SC",sans-serif;color:#fff}input::placeholder{color:#a0a0a0;opacity:1}label ui-icon+input+ui-icon{--size:18px}
.apps{display:flex;--size:24px}.task{width:49px;border-bottom:2px solid transparent;background-clip:padding-box}.task.first{width:55px;padding-right:2px}.run{background:linear-gradient(#8ac3f5,#8ac3f5) center bottom/40px 2px no-repeat;border:0;padding-bottom:2px}.act{background:#33434c;border-bottom:2px solid #8ac3f5}
.tray{display:flex;align-items:center;margin-left:auto}.two{text-align:center;line-height:18px;padding-top:2px;white-space:nowrap}.cpu{width:70px}.ic{display:flex;align-items:center;width:140px;justify-content:space-between;margin-left:7px}
.clock{width:76px;margin-left:9px}.note{position:relative;width:38px;height:40px}.badge{position:absolute;right:3px;bottom:5px;width:17px;height:17px;border:1px solid #aaa;border-radius:50%;background:#333;font-size:12px;line-height:15px;text-align:center}
.show{width:5px;border-left:1px solid #556;margin-left:8px;height:40px}.zh{font:14px/16px "Noto Sans CJK SC",sans-serif}`,
`<button class="start" aria-label="开始"><ui-icon name="win"></ui-icon></button><label><ui-icon name="ring"></ui-icon><input type="text" aria-label="搜索" placeholder="在这里输入你要搜索的内容"><ui-icon name="tmic"></ui-icon></label>
<div class="apps">${task('flower','浏览器','first')+task('edge','Edge')+task('store','应用商店')+task('explorer','文件资源管理器')+task('g','广联达','run')+task('logo','钢筋算量','act')+task('note','便笺','run')+task('ie','网页浏览器','run')}</div>
<div class="tray"><div class="two cpu">4%<br>CPU使用</div><div class="ic"><ui-icon name="chev"></ui-icon><ui-icon name="batt"></ui-icon><ui-icon name="wifi"></ui-icon><ui-icon name="vol"></ui-icon><span class="zh">中</span><ui-icon name="sogou"></ui-icon></div><div class="two clock">23:26<br>2017/6/23</div><button class="note" aria-label="通知"><ui-icon name="notice"></ui-icon><span class="badge">6</span></button><div class="show"></div></div>`);

define('ime-bar',`:host{display:flex;align-items:center}.bar{display:flex;align-items:center;justify-content:space-between;width:155px;height:23px;border:1px solid #a9c0dc;background:#fff;padding:0 3px;margin-left:2px;--size:15px}b{color:#1f73c7;font:700 14px/20px "Noto Sans CJK SC",sans-serif}.s{--size:28px}`,
`<ui-icon class="s" name="sogou"></ui-icon><div class="bar"><b>英</b>${['punct','mic','kbd','person','shirt','wrench'].map(n=>`<ui-icon name="${n}"></ui-icon>`).join('')}</div>`);

define('speed-ball',`:host{display:flex;align-items:flex-end;justify-content:center;width:48px;height:48px;border-radius:50%;background:#45c85a;border:2px solid #d5dbd7;box-shadow:0 0 0 1px #777,0 2px 3px #999;color:#fff;font:700 12px/16px "DejaVu Sans",sans-serif;padding-bottom:2px;box-sizing:border-box}`,'69');

define('bim-app',`:host{display:flex;flex-direction:column;position:relative;overflow:hidden}
main{flex:1;min-height:0;display:flex;gap:6px;position:relative}.work{flex:1;min-width:0;display:flex;flex-direction:column}.row{flex:1;min-height:0;display:flex}
.params{position:absolute;right:69px;top:12px;bottom:0;width:168px;z-index:2;border-bottom:0;padding-bottom:4px}
.stir{position:absolute;right:22px;top:53px;height:283px;width:155px;z-index:1}
ime-bar{position:absolute;right:316px;top:0}speed-ball{position:absolute;right:211px;top:-29px}`,
`<title-bar></title-bar><menu-bar></menu-bar><main-tools></main-tools>
<main><nav-panel></nav-panel><div class="work"><edit-tools></edit-tools><div class="row"><component-list></component-list><property-panel></property-panel></div></div>
<float-window class="stir" title=""><stirrup-drawing></stirrup-drawing></float-window><float-window class="params" title="参数图"><column-drawing></column-drawing></float-window></main>
<status-bar></status-bar><task-bar></task-bar><ime-bar></ime-bar><speed-ball></speed-ball>`);
</script>
</body>
</html>
